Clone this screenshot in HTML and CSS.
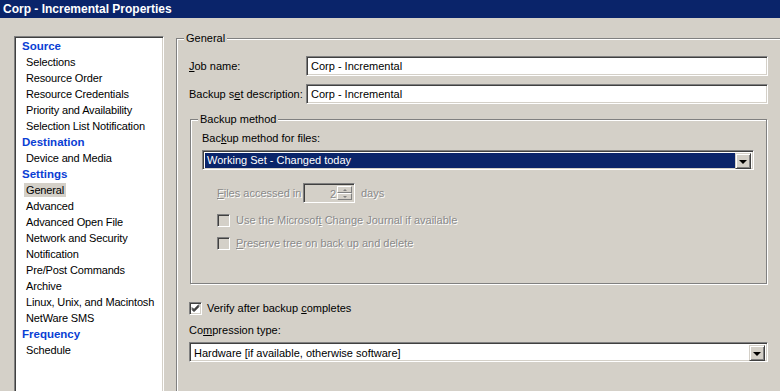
FILE: index.html
```html
<!DOCTYPE html>
<html>
<head>
<meta charset="utf-8">
<link rel="stylesheet" href="styles.css">
</head>
<body>
<div class="titlebar">Corp - Incremental Properties</div>
<div class="main">
  <div class="nav">
    <div class="nav-head">Source</div>
    <div class="nav-item"><span>Selections</span></div>
    <div class="nav-item"><span>Resource Order</span></div>
    <div class="nav-item"><span>Resource Credentials</span></div>
    <div class="nav-item"><span>Priority and Availability</span></div>
    <div class="nav-item"><span>Selection List Notification</span></div>
    <div class="nav-head">Destination</div>
    <div class="nav-item"><span>Device and Media</span></div>
    <div class="nav-head">Settings</div>
    <div class="nav-item"><span class="sel">General</span></div>
    <div class="nav-item"><span>Advanced</span></div>
    <div class="nav-item"><span>Advanced Open File</span></div>
    <div class="nav-item"><span>Network and Security</span></div>
    <div class="nav-item"><span>Notification</span></div>
    <div class="nav-item"><span>Pre/Post Commands</span></div>
    <div class="nav-item"><span>Archive</span></div>
    <div class="nav-item"><span>Linux, Unix, and Macintosh</span></div>
    <div class="nav-item"><span>NetWare SMS</span></div>
    <div class="nav-head">Frequency</div>
    <div class="nav-item"><span>Schedule</span></div>
  </div>

  <div class="group general">
    <span class="group-title">General</span>
    <div class="field-row first">
      <label class="field-label"><u>J</u>ob name:</label>
      <div class="textbox">Corp - Incremental</div>
    </div>
    <div class="field-row">
      <label class="field-label">Backup s<u>e</u>t description:</label>
      <div class="textbox">Corp - Incremental</div>
    </div>

    <div class="group method">
      <span class="group-title">Backup method</span>
      <div class="method-label">Bac<u>k</u>up method for files:</div>
      <div class="combo method-combo">
        <div class="combo-value selected">Working Set - Changed today</div>
        <div class="combo-btn"><span class="arrow"></span></div>
      </div>
      <div class="files-row disabled">
        <span class="files-label"><u>F</u>iles accessed in</span>
        <div class="spin">
          <span class="spin-value">2</span>
          <div class="spin-btns">
            <div class="spin-btn"><span class="up"></span></div>
            <div class="spin-btn"><span class="down"></span></div>
          </div>
        </div>
        <span class="days">days</span>
      </div>
      <div class="check-row disabled row-journal">
        <span class="checkbox"></span>
        <span>Use the Microsof<u>t</u> Change Journal if available</span>
      </div>
      <div class="check-row disabled row-preserve">
        <span class="checkbox"></span>
        <span><u>P</u>reserve tree on back up and delete</span>
      </div>
    </div>

    <div class="check-row verify">
      <span class="checkbox checked">
        <svg width="9" height="9" viewBox="0 0 9 9"><path d="M1 3.5l2 2 5-5M1 4.5l2 2 5-5M1 5.5l2 2 5-5" stroke="#000" stroke-width="1" fill="none"/></svg>
      </span>
      <span>Verify after backup <u>c</u>ompletes</span>
    </div>
    <div class="comp-label">Co<u>m</u>pression type:</div>
    <div class="combo comp-combo">
      <div class="combo-value">Hardware [if available, otherwise software]</div>
      <div class="combo-btn"><span class="arrow"></span></div>
    </div>
  </div>
</div>
</body>
</html>
```

FILE: styles.css
```css
* { box-sizing: border-box; }
body {
  margin: 0;
  width: 780px;
  height: 391px;
  overflow: hidden;
  background: #d4d0c8;
  font-family: "Liberation Sans", Arial, sans-serif;
  font-size: 11px;
  color: #000;
}
u { text-decoration: underline; text-underline-offset: 1px; }

.titlebar {
  height: 18px;
  background: #0a246a;
  color: #fff;
  font-weight: bold;
  font-size: 12px;
  line-height: 18px;
  padding-left: 3px;
}

.main {
  display: flex;
  align-items: flex-start;
  padding: 18px 0 0 14px;
}

.nav {
  width: 150px;
  height: 372px;
  flex: none;
  background: #fff;
  border: 1px solid;
  border-color: #808080 #fff #fff #808080;
  box-shadow: inset 1px 1px 0 #404040, inset -1px -1px 0 #d4d0c8;
  padding-top: 1px;
}
.nav-head {
  height: 16px;
  line-height: 17px;
  padding-left: 7px;
  font-weight: bold;
  font-size: 11.5px;
  color: #0a3ed4;
}
.nav-item {
  height: 16px;
  line-height: 17px;
  padding-left: 9px;
  white-space: nowrap;
}
.nav-item span {
  padding: 1px 2px;
  letter-spacing: -0.15px;
}
.nav-item span.sel { background: #d4d0c8; }

.group {
  position: relative;
  border: 1px solid #808080;
  box-shadow: inset 1px 1px 0 #fff, 1px 1px 0 #fff;
}
.group-title {
  position: absolute;
  top: -7px;
  left: 7px;
  padding: 0 2px;
  line-height: 13px;
  background: #d4d0c8;
}

.general {
  flex: none;
  width: 620px;
  height: 360px;
  margin: 2px 0 0 12px;
  padding: 17px 0 0 12px;
}

.field-row {
  display: flex;
  align-items: center;
  height: 20px;
  margin-bottom: 8px;
}
.field-label { width: 117px; flex: none; }

.textbox, .combo, .spin {
  border: 1px solid;
  border-color: #808080 #fff #fff #808080;
  box-shadow: inset 1px 1px 0 #404040, inset -1px -1px 0 #d4d0c8;
}
.textbox {
  width: 462px;
  height: 20px;
  background: #fff;
  padding: 0 0 0 4px;
  line-height: 18px;
}

.method {
  width: 577px;
  height: 165px;
  margin: 15px 0 0 1px;
  padding: 12px 0 0 11px;
}
.method-label { line-height: 13px; }

.combo {
  display: flex;
  height: 20px;
  padding: 2px;
  background: #fff;
}
.combo-value {
  flex: 1;
  height: 15px;
  line-height: 15px;
  padding-left: 2px;
  white-space: nowrap;
}
.combo-value.selected { background: #0a246a; color: #fff; }
.combo-btn {
  width: 16px;
  height: 16px;
  flex: none;
  background: #d4d0c8;
  border: 1px solid;
  border-color: #d4d0c8 #404040 #404040 #d4d0c8;
  box-shadow: inset 1px 1px 0 #fff, inset -1px -1px 0 #808080;
  display: flex;
  align-items: center;
  justify-content: center;
}
.arrow {
  width: 0;
  height: 0;
  border-left: 4px solid transparent;
  border-right: 4px solid transparent;
  border-top: 4px solid #000;
  margin-top: 1px;
}
.method-combo { width: 552px; margin-top: 5px; }

.disabled { color: #8a8a8a; text-shadow: 1px 1px 0 #fff; }

.files-row {
  display: flex;
  align-items: center;
  height: 20px;
  margin: 13px 0 0 15px;
}
.files-label { width: 86px; }
.spin {
  display: flex;
  width: 52px;
  height: 20px;
  padding: 2px;
  background: #d4d0c8;
}
.spin-value {
  flex: 1;
  text-align: right;
  line-height: 16px;
  padding-right: 1px;
}
.spin-btns { display: flex; flex-direction: column; width: 15px; }
.spin-btn {
  height: 8px;
  background: #d4d0c8;
  border: 1px solid;
  border-color: #fff #808080 #808080 #fff;
  display: flex;
  align-items: center;
  justify-content: center;
}
.spin-btn .up, .spin-btn .down {
  width: 0; height: 0;
  border-left: 2px solid transparent;
  border-right: 2px solid transparent;
}
.spin-btn .up { border-bottom: 2px solid #808080; }
.spin-btn .down { border-top: 2px solid #808080; }
.days { margin-left: 6px; }

.check-row {
  display: flex;
  align-items: center;
  height: 13px;
  line-height: 13px;
}
.row-journal { margin: 11px 0 0 15px; }
.row-preserve { margin: 10px 0 0 15px; }
.checkbox {
  width: 13px;
  height: 13px;
  flex: none;
  margin-right: 6px;
  border: 1px solid;
  border-color: #808080 #fff #fff #808080;
  box-shadow: inset 1px 1px 0 #404040, inset -1px -1px 0 #d4d0c8;
  background: #d4d0c8;
  display: flex;
  align-items: center;
  justify-content: center;
}
.checkbox.checked { background: #fff; margin-right: 5px; }
.verify { margin-top: 18px; }

.comp-label { margin-top: 9px; line-height: 13px; }
.comp-combo { width: 579px; margin-top: 5px; }
.comp-combo .combo-value { line-height: 16px; height: 16px; padding-left: 2px; }
```
